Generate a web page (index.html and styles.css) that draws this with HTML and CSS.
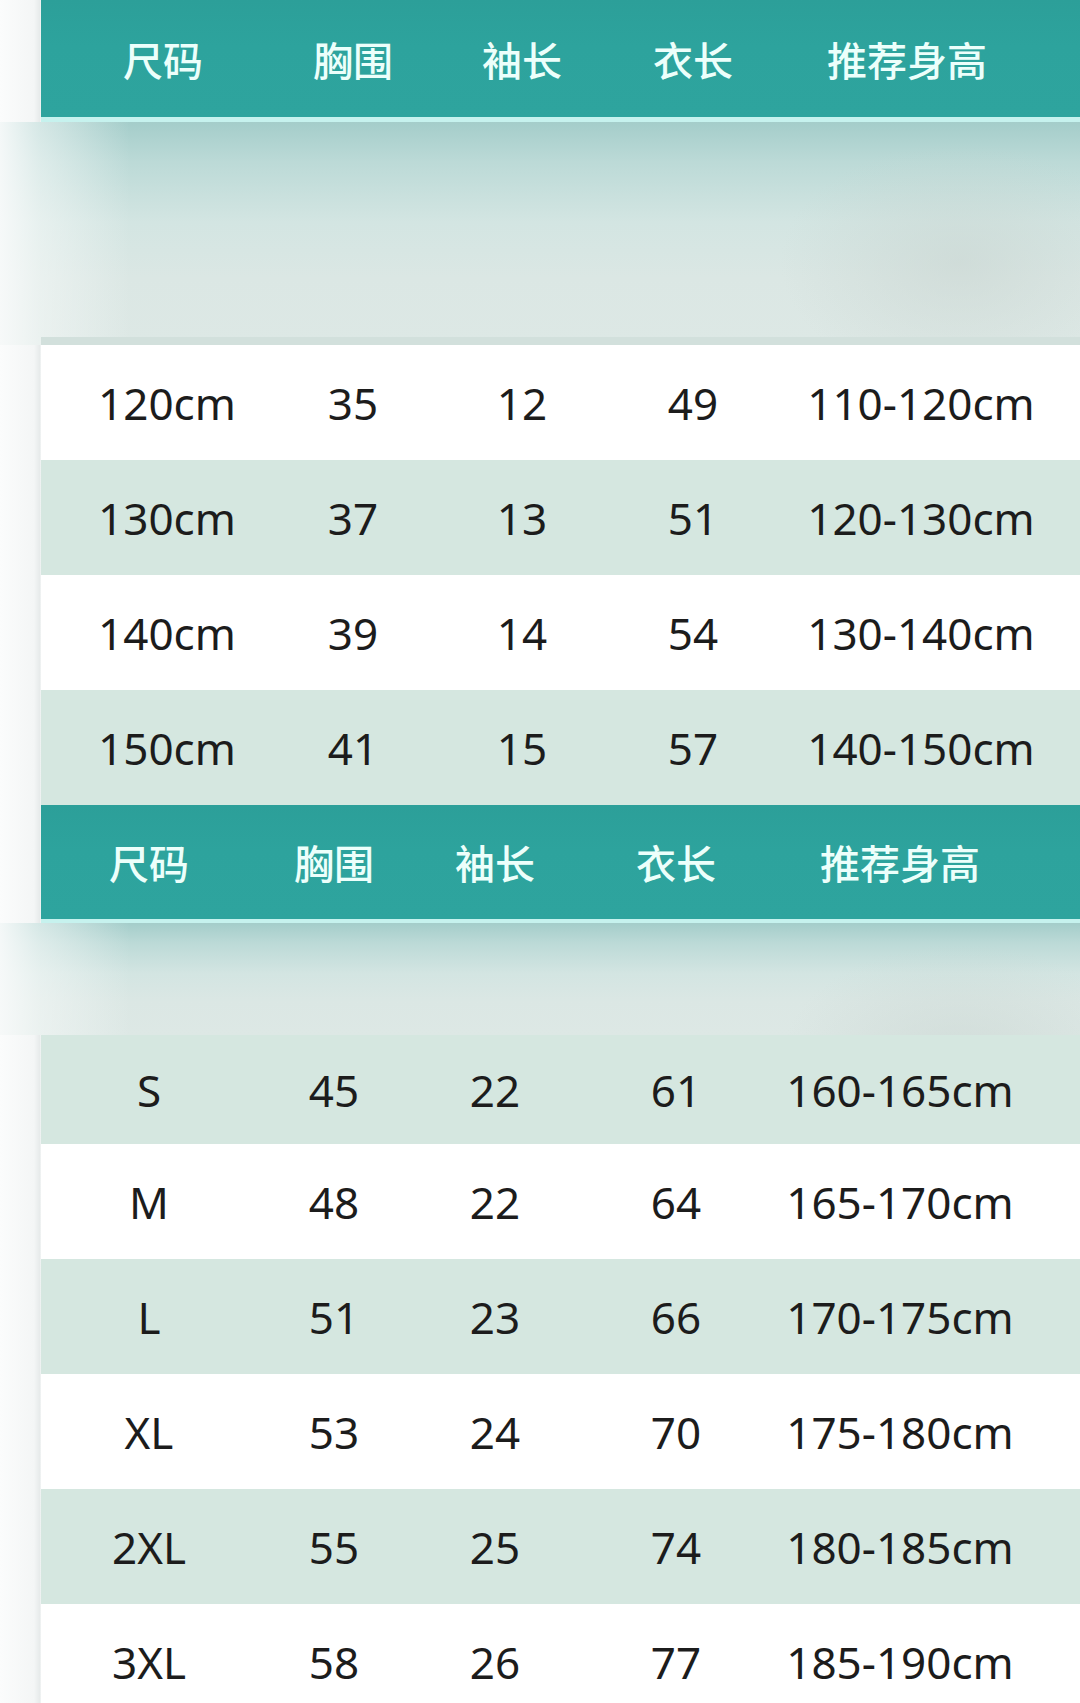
FILE: index.html
```html
<!DOCTYPE html>
<html lang="zh-CN">
<head>
<meta charset="utf-8">
<title>尺码表</title>
<link rel="stylesheet" href="styles.css">
</head>
<body>
<div class="page">
  <section class="chart chart-kids">
    <div class="head">
      <div class="cell">尺码</div>
      <div class="cell">胸围</div>
      <div class="cell">袖长</div>
      <div class="cell">衣长</div>
      <div class="cell">推荐身高</div>
    </div>
    <div class="head-line"></div>
    <div class="band band-tall"><div class="band-fill"></div><div class="band-edge"></div></div>
    <div class="row">
      <div class="cell c1">120cm</div><div class="cell">35</div><div class="cell">12</div><div class="cell">49</div><div class="cell c5">110-120cm</div>
    </div>
    <div class="row alt">
      <div class="cell c1">130cm</div><div class="cell">37</div><div class="cell">13</div><div class="cell">51</div><div class="cell c5">120-130cm</div>
    </div>
    <div class="row">
      <div class="cell c1">140cm</div><div class="cell">39</div><div class="cell">14</div><div class="cell">54</div><div class="cell c5">130-140cm</div>
    </div>
    <div class="row alt">
      <div class="cell c1">150cm</div><div class="cell">41</div><div class="cell">15</div><div class="cell">57</div><div class="cell c5">140-150cm</div>
    </div>
  </section>

  <section class="chart chart-adult">
    <div class="head head-short">
      <div class="cell">尺码</div>
      <div class="cell">胸围</div>
      <div class="cell">袖长</div>
      <div class="cell">衣长</div>
      <div class="cell">推荐身高</div>
    </div>
    <div class="head-line thin"></div>
    <div class="band band-short"><div class="band-fill"></div></div>
    <div class="row alt first">
      <div class="cell">S</div><div class="cell">45</div><div class="cell">22</div><div class="cell">61</div><div class="cell">160-165cm</div>
    </div>
    <div class="row">
      <div class="cell">M</div><div class="cell">48</div><div class="cell">22</div><div class="cell">64</div><div class="cell">165-170cm</div>
    </div>
    <div class="row alt">
      <div class="cell">L</div><div class="cell">51</div><div class="cell">23</div><div class="cell">66</div><div class="cell">170-175cm</div>
    </div>
    <div class="row">
      <div class="cell">XL</div><div class="cell">53</div><div class="cell">24</div><div class="cell">70</div><div class="cell">175-180cm</div>
    </div>
    <div class="row alt">
      <div class="cell">2XL</div><div class="cell">55</div><div class="cell">25</div><div class="cell">74</div><div class="cell">180-185cm</div>
    </div>
    <div class="row">
      <div class="cell">3XL</div><div class="cell">58</div><div class="cell">26</div><div class="cell">77</div><div class="cell">185-190cm</div>
    </div>
  </section>
</div>
</body>
</html>
```

FILE: styles.css
```css
html, body {
  margin: 0;
  padding: 0;
}

body {
  background: #f7f9f9;
  font-family: "Noto Sans", "Noto Sans CJK SC", sans-serif;
}

.page {
  width: 1080px;
  height: 1703px;
  overflow: hidden;
  background: linear-gradient(to right, #fbfcfc 0, #f4f6f6 34px, #e6eaea 40px, #f7f9f9 41px);
}

.chart {
  display: flex;
  flex-direction: column;
}

.head,
.row {
  margin-left: 41px;
  display: grid;
  align-items: center;
}

.chart-kids .head,
.chart-kids .row {
  grid-template-columns: 244px 136px 202px 140px 288px;
}

.chart-adult .head,
.chart-adult .row {
  grid-template-columns: 216px 154px 168px 194px 254px;
}

.cell {
  text-align: center;
  white-space: nowrap;
}

.head {
  height: 117px;
  background: linear-gradient(to bottom, #2c9f99 0, #2da39d 40%, #2ea49e 100%);
  color: #ecfffb;
  font-family: "Noto Sans CJK SC", sans-serif;
  font-size: 40px;
  font-weight: 500;
}

.head-short {
  height: 114px;
}

.head-line {
  height: 5px;
  margin-left: 41px;
  background: #c6f2ee;
}

.head-line.thin {
  height: 4px;
}

.band {
  display: flex;
  flex-direction: column;
  background:
    linear-gradient(to right, rgba(248, 250, 250, 0.95) 0, rgba(244, 248, 247, 0.6) 40px, rgba(240, 245, 244, 0) 130px),
    linear-gradient(to bottom, #a4cdca 0, #bcdad7 18%, #d3e5e2 45%, #dbe7e4 70%, #dde8e5 100%);
}

.band-tall {
  height: 223px;
}

.band-short {
  height: 112px;
}

.band-fill {
  flex: 1;
  background: radial-gradient(ellipse 180px 120px at 960px 140px, rgba(200, 212, 208, 0.55), rgba(200, 212, 208, 0));
}

.band-edge {
  height: 8px;
  margin-left: 41px;
  background: #d2e0dc;
}

.row {
  height: 115px;
  background: #ffffff;
  color: #1c1c1c;
  font-size: 44px;
  font-weight: 400;
}

.row.alt {
  background: #d5e7e0;
}

.row.first {
  height: 109px;
}

.chart-kids .row .c1 {
  padding-left: 8px;
}

.chart-kids .row .c5 {
  padding-left: 28px;
}
```
